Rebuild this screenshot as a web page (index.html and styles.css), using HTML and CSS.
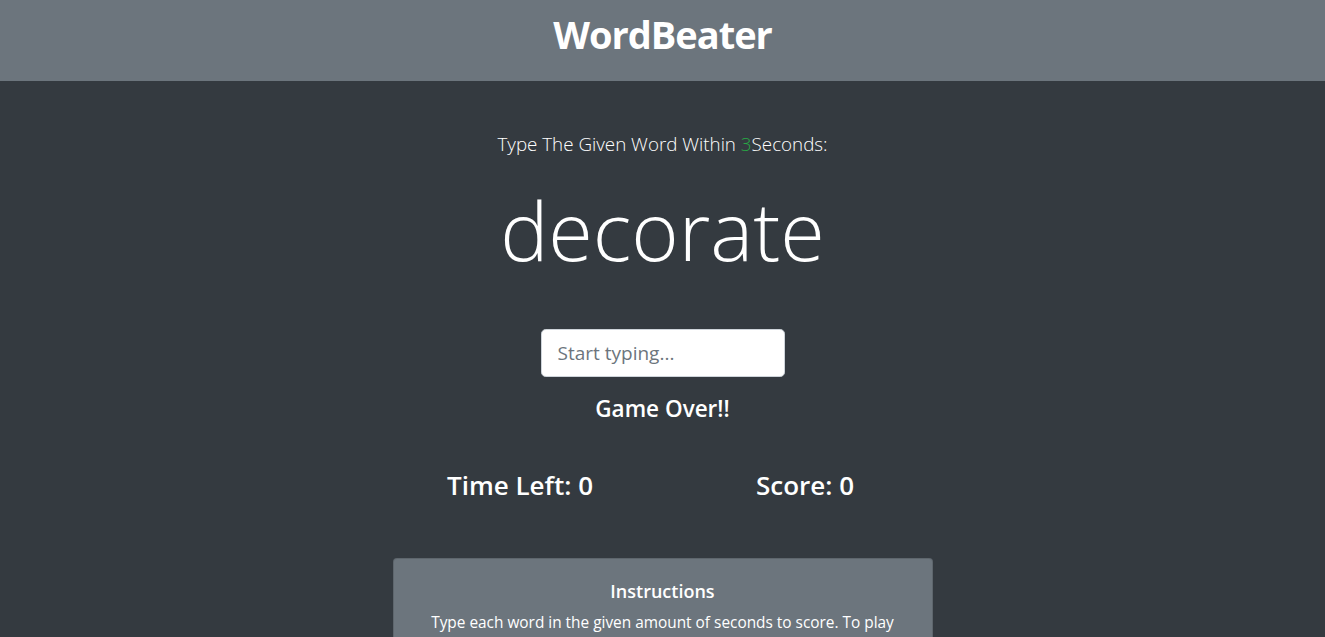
FILE: index.html
```html
<!DOCTYPE html>
<html lang="en">
<head>
<meta charset="utf-8">
<title>WordBeater</title>
<link rel="stylesheet" href="styles.css">
</head>
<body>
<header class="site-header">
  <h1 class="brand">WordBeater</h1>
</header>
<main class="game">
  <p class="lead">Type The Given Word Within <span class="seconds">3</span>Seconds:</p>
  <h2 class="current-word">decorate</h2>
  <input type="text" class="word-input" placeholder="Start typing...">
  <h4 class="message">Game Over!!</h4>
  <div class="stats">
    <div class="stat"><h3>Time Left: <span>0</span></h3></div>
    <div class="stat"><h3>Score: <span>0</span></h3></div>
  </div>
  <div class="card">
    <h5 class="card-title">Instructions</h5>
    <p class="card-text">Type each word in the given amount of seconds to score. To play again, just type the current word. Your score will reset.</p>
  </div>
</main>
</body>
</html>
```
FILE: styles.css
```css
* { box-sizing: border-box; }
html, body { margin: 0; padding: 0; }
body {
  background: #343a40;
  color: #fff;
  font-family: "Open Sans", "Noto Sans", sans-serif;
  font-size: 16px;
  line-height: 1.5;
}
.site-header {
  background: #6c757d;
  height: 81px;
  padding: 10px 16px 0;
  text-align: center;
}
.brand {
  margin: 0;
  font-size: 38px;
  font-weight: 700;
  line-height: 48px;
  letter-spacing: -1px;
}
.game {
  width: 540px;
  margin: 48px auto 0;
  display: flex;
  flex-direction: column;
  align-items: center;
  text-align: center;
}
.lead {
  margin: 0 0 16px;
  font-size: 18.8px;
  font-weight: 300;
  line-height: 30px;
}
.seconds { color: #28a745; }
.current-word {
  margin: 0 0 48px;
  padding-top: 5px;
  font-size: 81px;
  font-weight: 300;
  line-height: 100.6px;
}
.word-input {
  width: 244px;
  height: 48px;
  padding: 8px 16px;
  font-family: inherit;
  font-size: 19px;
  color: #495057;
  background: #fff;
  border: 1px solid #ced4da;
  border-radius: 4.8px;
  outline: none;
}
.word-input::placeholder { color: #6c757d; }
.message {
  margin: 18px 0 0;
  font-size: 22.5px;
  font-weight: 600;
  line-height: 28.8px;
}
.stats {
  margin-top: 46px;
  width: 570px;
  display: flex;
}
.stat { flex: 1; }
.stat h3 {
  margin: 0;
  font-size: 26px;
  font-weight: 600;
  line-height: 33.6px;
}
.card {
  margin-top: 55px;
  width: 540px;
  background: #6c757d;
  border: 1px solid rgba(0,0,0,.125);
  border-radius: 4px;
  padding: 20px 20px 20px;
}
.card-title {
  margin: 0 0 8px;
  font-size: 18px;
  font-weight: 600;
  line-height: 24px;
}
.card-text {
  margin: 0;
  font-size: 15.4px;
  line-height: 24px;
}
```
